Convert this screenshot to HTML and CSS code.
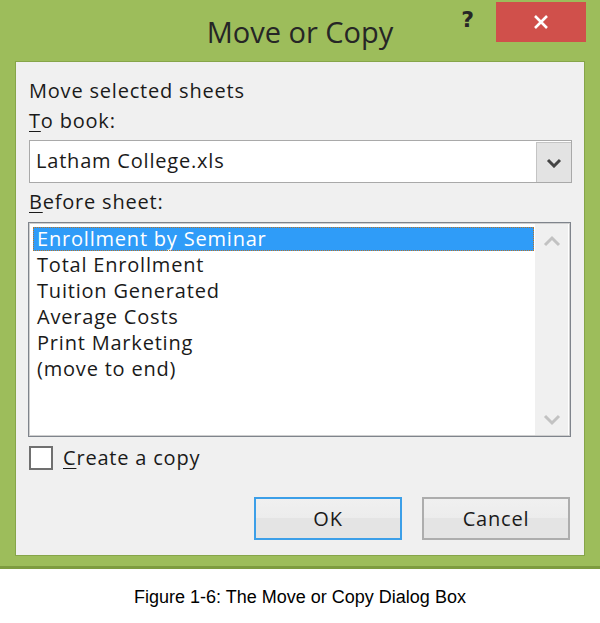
FILE: index.html
```html
<!DOCTYPE html>
<html>
<head>
<meta charset="utf-8">
<link rel="stylesheet" href="styles.css">
</head>
<body>
<div class="window">
  <div class="titlebar">
    <div class="spacer"></div>
    <div class="title">Move or Copy</div>
    <div class="controls">
      <span class="help">?</span>
      <span class="close"><svg width="16" height="16" viewBox="0 0 16 16"><path d="M2 2 L14 14 M14 2 L2 14" stroke="#fff" stroke-width="2.6" fill="none"/></svg></span>
    </div>
  </div>
  <div class="panel">
    <div class="label first">Move selected sheets</div>
    <div class="label tight"><u>T</u>o book:</div>
    <div class="combo">
      <span class="combo-text">Latham College.xls</span>
      <span class="combo-btn"><svg width="16" height="10" viewBox="0 0 16 10"><path d="M2 2 L8 8 L14 2" stroke="#444" stroke-width="3" fill="none"/></svg></span>
    </div>
    <div class="label before"><u>B</u>efore sheet:</div>
    <div class="listbox">
      <ul class="items">
        <li class="selected">Enrollment by Seminar</li>
        <li>Total Enrollment</li>
        <li>Tuition Generated</li>
        <li>Average Costs</li>
        <li>Print Marketing</li>
        <li>(move to end)</li>
      </ul>
      <div class="scrollbar">
        <svg width="18" height="12" viewBox="0 0 18 12"><path d="M2 10 L9 3 L16 10" stroke="#c2c2c2" stroke-width="3" fill="none"/></svg>
        <svg width="18" height="12" viewBox="0 0 18 12"><path d="M2 2 L9 9 L16 2" stroke="#c2c2c2" stroke-width="3" fill="none"/></svg>
      </div>
    </div>
    <div class="check"><span class="box"></span><span class="check-label"><u>C</u>reate a copy</span></div>
    <div class="buttons">
      <div class="btn default">OK</div>
      <div class="btn">Cancel</div>
    </div>
  </div>
</div>
<p class="caption">Figure 1-6: The Move or Copy Dialog Box</p>
</body>
</html>
```

FILE: styles.css
```css
html, body {
  margin: 0;
  padding: 0;
  background: #ffffff;
}
body {
  width: 600px;
  height: 623px;
  overflow: hidden;
}
.window {
  width: 600px;
  box-sizing: border-box;
  background: #9dbd5b;
  border-bottom: 3px solid #7e9c40;
  padding: 0 0 10px 15px;
}
.titlebar {
  display: grid;
  grid-template-columns: 1fr auto 1fr;
  height: 61px;
  margin-left: -15px;
}
.title {
  font-family: "Open Sans", "Noto Sans", sans-serif;
  font-size: 29px;
  line-height: 61px;
  color: #262626;
  padding-top: 1px;
}
.controls {
  display: flex;
  justify-content: flex-end;
  align-items: flex-start;
  padding-top: 2px;
  padding-right: 14px;
}
.help {
  font-family: "DejaVu Sans", sans-serif;
  font-weight: bold;
  font-size: 22px;
  color: #262626;
  line-height: 40px;
  margin-right: 22px;
  margin-top: -2px;
}
.close {
  width: 90px;
  height: 40px;
  background: #d0504b;
  display: flex;
  align-items: center;
  justify-content: center;
}
.panel {
  width: 570px;
  box-sizing: border-box;
  background: #f0f0f0;
  border: 1px solid #86a549;
  padding: 0 0 15px 13px;
  font-family: "Open Sans", "Noto Sans", sans-serif;
  font-size: 20px;
  letter-spacing: 0.8px;
  color: #1a1a1a;
}
.label {
  line-height: 26px;
  height: 26px;
}
.label.first { margin-top: 16px; }
.label.tight { margin-top: 4px; }
.label.before { margin-top: 6px; }
u { text-decoration-thickness: 1px; text-underline-offset: 3px; }
.combo {
  margin-top: 6px;
  width: 543px;
  height: 43px;
  box-sizing: border-box;
  border: 1px solid #a9a9a9;
  background: #ffffff;
  display: flex;
  align-items: stretch;
}
.combo-text {
  flex: 1;
  padding-left: 6px;
  line-height: 40px;
}
.combo-btn {
  width: 35px;
  margin: 1px 0 0 0;
  box-sizing: border-box;
  background: #e3e3e3;
  border: 1px solid #c4c4c4;
  border-right: 0;
  border-bottom: 0;
  display: flex;
  align-items: center;
  justify-content: center;
}
.listbox {
  margin-top: 7px;
  width: 543px;
  height: 215px;
  box-sizing: border-box;
  border: 1px solid #7f848c;
  box-shadow: inset 0 0 0 1px #cfcfcf;
  background: #ffffff;
  display: flex;
  margin-left: -1px;
}
.items {
  list-style: none;
  margin: 0;
  padding: 4px 0 0 4px;
  flex: 1;
}
.items li {
  height: 24px;
  line-height: 24px;
  margin-bottom: 2px;
  padding-left: 4px;
  margin-right: 1px;
}
.items li.selected {
  background: #2f9cf8;
  color: #ffffff;
  outline: 1px dotted #b8742a;
  outline-offset: -1px;
}
.scrollbar {
  width: 33px;
  margin: 1px 2px 1px 0;
  background: #f0f0f0;
  display: flex;
  flex-direction: column;
  justify-content: space-between;
  align-items: center;
  padding: 11px 0 9px;
}
.check {
  margin-top: 9px;
  height: 24px;
  display: flex;
  align-items: center;
}
.box {
  width: 24px;
  height: 24px;
  box-sizing: border-box;
  border: 2px solid #707070;
  background: #ffffff;
}
.check-label {
  margin-left: 10px;
  line-height: 24px;
}
.buttons {
  margin-top: 27px;
  display: flex;
  justify-content: flex-end;
  gap: 20px;
  padding-right: 14px;
}
.btn {
  width: 148px;
  height: 43px;
  box-sizing: border-box;
  border: 2px solid #adadad;
  background: linear-gradient(#f0f0f0 0%, #ececec 50%, #e4e4e4 50%, #e4e4e4 100%);
  display: flex;
  align-items: center;
  justify-content: center;
}
.btn.default {
  border-color: #3c9fe8;
}
.caption {
  margin: 18px 0 0 0;
  text-align: center;
  font-family: "Liberation Sans", Arial, sans-serif;
  font-size: 18px;
  color: #000000;
}
```
